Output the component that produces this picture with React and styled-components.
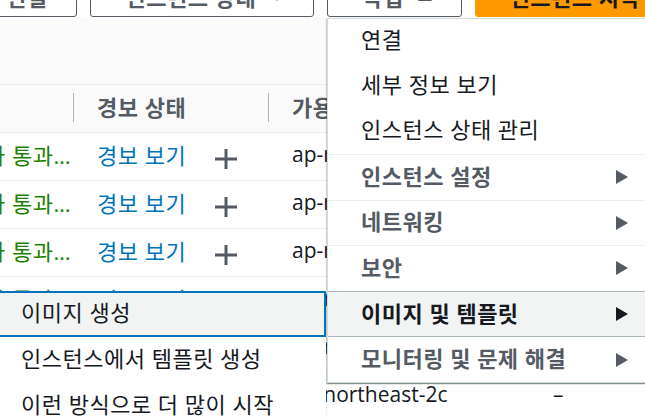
import React from 'react';
import styled, { createGlobalStyle } from 'styled-components';

const GlobalStyle = createGlobalStyle`
  html, body {
    margin: 0;
    padding: 0;
    background: #fff;
    overflow: hidden;
  }
  body {
    font-family: "Open Sans", "Noto Sans CJK KR", sans-serif;
    font-size: 22px;
    letter-spacing: 0.5px;
    color: #16191f;
  }
`;

const Page = styled.div`
  position: relative;
  width: 645px;
  height: 417px;
  overflow: hidden;
`;

const Toolbar = styled.div`
  display: flex;
  gap: 13px;
  height: 42px;
  margin: -25px 0 0 -29px;
`;

const Button = styled.button`
  display: flex;
  align-items: center;
  gap: 14px;
  box-sizing: border-box;
  height: 42px;
  padding: 0 29px 0 34px;
  border: 1px solid ${p => (p.$primary ? '#ff9900' : '#545b64')};
  border-radius: 3px;
  background: ${p => (p.$primary ? '#ff9900' : '#fff')};
  color: ${p => (p.$primary ? '#16191f' : '#545b64')};
  font: bold 22px "Open Sans", "Noto Sans CJK KR", sans-serif;
  letter-spacing: 0.5px;
  white-space: nowrap;
`;

const Filler = styled.div`
  height: 67px;
  background: #fafafa;
  border-bottom: 1px solid #eaeded;
`;

const Table = styled.div`
  margin-left: -139px;
`;

const Row = styled.div`
  display: grid;
  grid-template-columns: 212px 195px 261px 1fr;
  box-sizing: border-box;
  height: 48px;
  border-bottom: 1px solid #eaeded;
  background: ${p => (p.$head ? '#fafafa' : '#fff')};
  font-weight: ${p => (p.$head ? 'bold' : 'normal')};
  color: ${p => (p.$head ? '#545b64' : '#16191f')};
`;

const Cell = styled.div`
  position: relative;
  display: flex;
  align-items: center;
  justify-content: ${p => (p.$end ? 'flex-end' : 'flex-start')};
  gap: 29px;
  box-sizing: border-box;
  padding: ${p => (p.$end ? '0 2px 6px 24px' : '0 24px 6px')};
  font-size: ${p => (p.$latin ? '21px' : 'inherit')};
  letter-spacing: ${p => (p.$latin ? '0' : 'inherit')};
  white-space: nowrap;
  overflow: hidden;

  ${p =>
    p.$divider &&
    `&::before {
      content: '';
      position: absolute;
      left: 0;
      top: 8px;
      height: 29px;
      width: 1px;
      background: #aab7b8;
    }`}
`;

const Status = styled.span`
  color: #1d8102;
`;

const Link = styled.a`
  color: #0073bb;
  text-decoration: none;
`;

const PlusIcon = styled.svg`
  margin-top: 10px;
  flex: none;
`;

const Menu = styled.div`
  position: absolute;
  top: 18px;
  left: 327px;
  width: 330px;
  background: #fff;
  border: 1px solid #d5dbdb;
  box-shadow: 0 1px 1px 0 rgba(0, 28, 36, 0.3), 1px 1px 1px 0 rgba(0, 28, 36, 0.15),
    -1px 1px 1px 0 rgba(0, 28, 36, 0.15);
`;

const MenuItem = styled.div`
  display: flex;
  align-items: center;
  box-sizing: border-box;
  height: 45px;
  padding: 0 0 7px 33px;
  color: #16191f;
  white-space: nowrap;
`;

const Group = styled.div`
  position: relative;
  display: flex;
  align-items: center;
  justify-content: space-between;
  box-sizing: border-box;
  height: 45.6px;
  padding: 0 30px 0 33px;
  border-top: 1px solid ${p => (p.$active || p.$afterActive ? '#aab7b8' : '#eaeded')};
  background: ${p => (p.$active ? '#f2f3f3' : '#fff')};
  color: ${p => (p.$active ? '#16191f' : '#545b64')};
  font-weight: bold;
  white-space: nowrap;
`;

const GroupLabel = styled.span`
  padding-bottom: 5px;
`;

const SubMenu = styled.div`
  position: absolute;
  top: -1px;
  right: calc(100% + 2px);
  width: 340px;
  background: #fff;
  box-shadow: 0 1px 1px 0 rgba(0, 28, 36, 0.3), -1px 1px 1px 0 rgba(0, 28, 36, 0.15);
  font-weight: normal;
  color: #16191f;
`;

const SubItem = styled.div`
  display: flex;
  align-items: center;
  box-sizing: border-box;
  height: 46px;
  padding: 0 0 5px 33px;
  border: 2px solid ${p => (p.$focus ? '#0073bb' : 'transparent')};
  background: ${p => (p.$focus ? '#f2f3f3' : '#fff')};
  white-space: nowrap;
`;

const Caret = ({ up }) => (
  <svg width="14" height="9" viewBox="0 0 14 9">
    <polygon points={up ? '0,9 7,0 14,9' : '0,0 14,0 7,9'} fill="currentColor" />
  </svg>
);

const Arrow = () => (
  <svg width="12" height="14" viewBox="0 0 12 14">
    <polygon points="0,0 12,7 0,14" fill="currentColor" />
  </svg>
);

const Plus = () => (
  <PlusIcon width="22" height="20" viewBox="0 0 22 20">
    <path d="M11 0v20M0 10h22" stroke="#545b64" strokeWidth="3" fill="none" />
  </PlusIcon>
);

const rows = [1, 2, 3, 4, 5, 6];
const groups = ['인스턴스 설정', '네트워킹', '보안', '이미지 및 템플릿', '모니터링 및 문제 해결'];
const subItems = ['이미지 생성', '인스턴스에서 템플릿 생성', '이런 방식으로 더 많이 시작'];

const App = () => {
  return (
    <Page>
      <GlobalStyle />
      <Toolbar>
        <Button>연결</Button>
        <Button>
          인스턴스 상태 <Caret />
        </Button>
        <Button>
          작업 <Caret up />
        </Button>
        <Button $primary>
          인스턴스 시작 <Caret />
        </Button>
      </Toolbar>
      <Filler />
      <Table>
        <Row $head>
          <Cell>상태 검사</Cell>
          <Cell $divider>경보 상태</Cell>
          <Cell $divider>가용 영역</Cell>
          <Cell $divider>퍼블릭 IPv4 DNS</Cell>
        </Row>
        {rows.map(r => (
          <Row key={r}>
            <Cell $end>
              <Status>2/2개 검사 통과…</Status>
            </Cell>
            <Cell>
              <Link>경보 보기</Link>
              <Plus />
            </Cell>
            <Cell $latin>ap-northeast-2c</Cell>
            <Cell $latin>–</Cell>
          </Row>
        ))}
      </Table>
      <Menu>
        <MenuItem>연결</MenuItem>
        <MenuItem>세부 정보 보기</MenuItem>
        <MenuItem>인스턴스 상태 관리</MenuItem>
        {groups.map((g, i) => (
          <Group key={g} $active={i === 3} $afterActive={i === 4}>
            <GroupLabel>{g}</GroupLabel>
            <Arrow />
            {i === 3 && (
              <SubMenu>
                {subItems.map((s, j) => (
                  <SubItem key={s} $focus={j === 0}>
                    {s}
                  </SubItem>
                ))}
              </SubMenu>
            )}
          </Group>
        ))}
      </Menu>
    </Page>
  );
};

export default App;
